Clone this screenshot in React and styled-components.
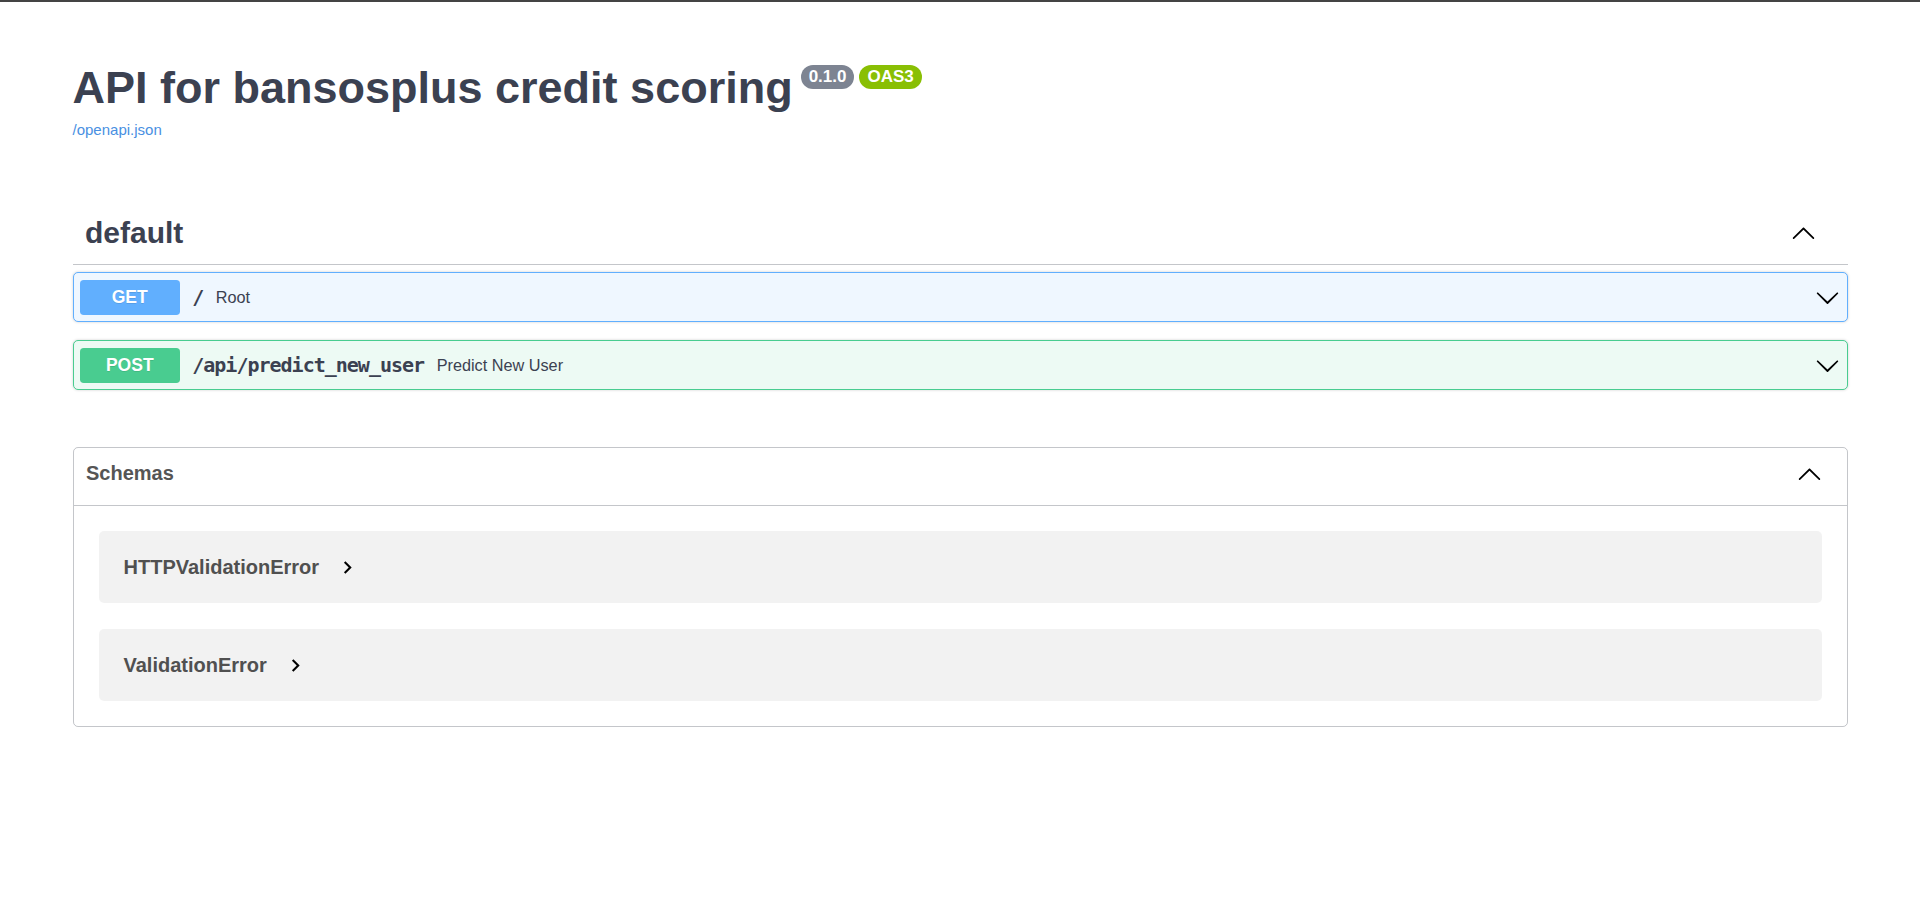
import React from 'react'
import styled, { createGlobalStyle } from 'styled-components'

const GlobalStyle = createGlobalStyle`
  body {
    margin: 0;
    background: #fff;
    font-family: 'Liberation Sans', Arial, sans-serif;
    color: #3b4151;
  }
`

const Page = styled.div`
  border-top: 2px solid #444;
`

const Wrapper = styled.div`
  max-width: 1825px;
  margin: 0 auto;
  padding: 0 25px;
  box-sizing: border-box;
`

const Info = styled.div`
  padding-top: 60px;
  margin-bottom: 62px;
`

const TitleRow = styled.div`
  display: flex;
  align-items: flex-start;
`

const Title = styled.h2`
  margin: 0;
  font-size: 45px;
  line-height: 52px;
  font-weight: 700;
  color: #3b4151;
`

const Badges = styled.div`
  display: flex;
  gap: 5px;
  margin: 3px 0 0 8px;
`

const Badge = styled.span`
  background: ${(p) => p.$color};
  color: #fff;
  font-size: 17px;
  font-weight: 700;
  line-height: 24px;
  height: 24px;
  padding: 0 8px;
  border-radius: 57px;
`

const SpecLink = styled.a`
  display: inline-block;
  margin-top: 7px;
  font-size: 15px;
  line-height: 17px;
  color: #4990e2;
  text-decoration: none;
`

const TagHeader = styled.div`
  display: flex;
  align-items: center;
  justify-content: space-between;
  height: 64px;
  box-sizing: border-box;
  padding: 0 32px 0 12.5px;
  border-bottom: 1px solid rgba(59, 65, 81, 0.3);
  margin-bottom: 7px;
`

const TagTitle = styled.h3`
  margin: 0;
  font-size: 30px;
  font-weight: 700;
  color: #3b4151;
`

const OpBlock = styled.div`
  display: flex;
  align-items: center;
  border: 1px solid ${(p) => p.$color};
  background: ${(p) => p.$bg};
  border-radius: 5px;
  padding: 6.5px 6.25px;
  margin-bottom: 18px;
  box-shadow: 0 0 3px rgba(0, 0, 0, 0.19);
`

const Method = styled.span`
  min-width: 100px;
  height: 35px;
  display: flex;
  align-items: center;
  justify-content: center;
  background: ${(p) => p.$color};
  color: #fff;
  border-radius: 3.75px;
  font-size: 17.5px;
  font-weight: 700;
  text-shadow: 0 1px 0 rgba(0, 0, 0, 0.1);
`

const Path = styled.span`
  font-family: 'DejaVu Sans Mono', 'Liberation Mono', monospace;
  font-size: 20px;
  font-weight: 700;
  letter-spacing: -1px;
  padding: 0 12.5px;
  color: #3b4151;
`

const Summary = styled.span`
  flex: 1;
  font-size: 16.25px;
  color: #3b4151;
`

const Models = styled.section`
  margin-top: 57px;
  border: 1px solid rgba(59, 65, 81, 0.3);
  border-radius: 5px;
`

const ModelsHeader = styled.h4`
  display: flex;
  align-items: center;
  justify-content: space-between;
  margin: 0;
  height: 58px;
  box-sizing: border-box;
  padding: 12px 25px 19px 12.5px;
  border-bottom: 1px solid rgba(59, 65, 81, 0.3);
  font-size: 20px;
  font-weight: 700;
  color: #555;
`

const ModelsBody = styled.div`
  display: flex;
  flex-direction: column;
  gap: 26px;
  padding: 25px;
`

const ModelCard = styled.div`
  display: flex;
  align-items: center;
  height: 72px;
  padding: 0 25px;
  background: rgba(0, 0, 0, 0.05);
  border-radius: 5px;
`

const ModelName = styled.span`
  font-size: 20px;
  font-weight: 700;
  color: #505050;
`

const Icon = styled.svg`
  flex: none;
  width: 25px;
  height: 25px;
  fill: #000;
  margin-left: ${(p) => p.$ml || 0}px;
`

const ArrowUp = () => (
  <Icon viewBox='0 0 20 20'>
    <path d='M17.418 14.908c.272.268.709.268.979 0s.271-.701 0-.969l-7.908-7.83c-.27-.268-.707-.268-.979 0l-7.908 7.83c-.27.268-.27.701 0 .969.271.268.709.268.979 0L10 7.767l7.418 7.141z' />
  </Icon>
)

const ArrowDown = () => (
  <Icon viewBox='0 0 20 20'>
    <path d='M17.418 6.109c.272-.268.709-.268.979 0s.271.701 0 .969l-7.908 7.83c-.27.268-.707.268-.979 0l-7.908-7.83c-.27-.268-.27-.701 0-.969.271-.268.709-.268.979 0L10 13.25l7.418-7.141z' />
  </Icon>
)

const ModelToggle = () => (
  <Icon viewBox='0 0 24 24' $ml={16}>
    <path d='M10 6L8.59 7.41 13.17 12l-4.58 4.59L10 18l6-6z' />
  </Icon>
)

const operations = [
  { method: 'GET', path: '/', summary: 'Root', color: '#61affe', bg: '#eff7ff' },
  {
    method: 'POST',
    path: '/api/predict_new_user',
    summary: 'Predict New User',
    color: '#49cc90',
    bg: '#edfaf4',
  },
]

const schemas = ['HTTPValidationError', 'ValidationError']

const App = () => {
  return (
    <Page>
      <GlobalStyle />
      <Wrapper>
        <Info>
          <TitleRow>
            <Title>API for bansosplus credit scoring</Title>
            <Badges>
              <Badge $color='#7d8492'>0.1.0</Badge>
              <Badge $color='#89bf04'>OAS3</Badge>
            </Badges>
          </TitleRow>
          <SpecLink href='#'>/openapi.json</SpecLink>
        </Info>

        <TagHeader>
          <TagTitle>default</TagTitle>
          <ArrowUp />
        </TagHeader>
        {operations.map((op, index) => (
          <OpBlock key={index} $color={op.color} $bg={op.bg}>
            <Method $color={op.color}>{op.method}</Method>
            <Path>{op.path}</Path>
            <Summary>{op.summary}</Summary>
            <ArrowDown />
          </OpBlock>
        ))}

        <Models>
          <ModelsHeader>
            <span>Schemas</span>
            <ArrowUp />
          </ModelsHeader>
          <ModelsBody>
            {schemas.map((name) => (
              <ModelCard key={name}>
                <ModelName>{name}</ModelName>
                <ModelToggle />
              </ModelCard>
            ))}
          </ModelsBody>
        </Models>
      </Wrapper>
    </Page>
  )
}

export default App
